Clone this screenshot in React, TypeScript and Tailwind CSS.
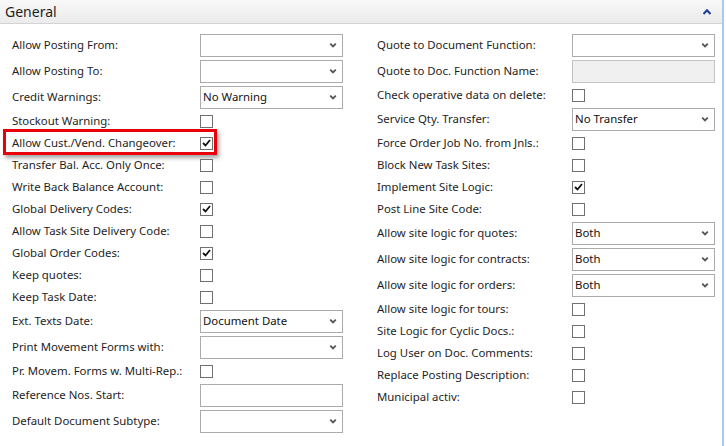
import React from 'react';

type Row =
  | { label: string; kind: 'select'; value?: string }
  | { label: string; kind: 'check'; checked?: boolean; highlight?: boolean }
  | { label: string; kind: 'text'; disabled?: boolean };

const leftRows: Row[] = [
  { label: 'Allow Posting From:', kind: 'select' },
  { label: 'Allow Posting To:', kind: 'select' },
  { label: 'Credit Warnings:', kind: 'select', value: 'No Warning' },
  { label: 'Stockout Warning:', kind: 'check' },
  { label: 'Allow Cust./Vend. Changeover:', kind: 'check', checked: true, highlight: true },
  { label: 'Transfer Bal. Acc. Only Once:', kind: 'check' },
  { label: 'Write Back Balance Account:', kind: 'check' },
  { label: 'Global Delivery Codes:', kind: 'check', checked: true },
  { label: 'Allow Task Site Delivery Code:', kind: 'check' },
  { label: 'Global Order Codes:', kind: 'check', checked: true },
  { label: 'Keep quotes:', kind: 'check' },
  { label: 'Keep Task Date:', kind: 'check' },
  { label: 'Ext. Texts Date:', kind: 'select', value: 'Document Date' },
  { label: 'Print Movement Forms with:', kind: 'select' },
  { label: 'Pr. Movem. Forms w. Multi-Rep.:', kind: 'check' },
  { label: 'Reference Nos. Start:', kind: 'text' },
  { label: 'Default Document Subtype:', kind: 'select' },
];

const rightRows: Row[] = [
  { label: 'Quote to Document Function:', kind: 'select' },
  { label: 'Quote to Doc. Function Name:', kind: 'text', disabled: true },
  { label: 'Check operative data on delete:', kind: 'check' },
  { label: 'Service Qty. Transfer:', kind: 'select', value: 'No Transfer' },
  { label: 'Force Order Job No. from Jnls.:', kind: 'check' },
  { label: 'Block New Task Sites:', kind: 'check' },
  { label: 'Implement Site Logic:', kind: 'check', checked: true },
  { label: 'Post Line Site Code:', kind: 'check' },
  { label: 'Allow site logic for quotes:', kind: 'select', value: 'Both' },
  { label: 'Allow site logic for contracts:', kind: 'select', value: 'Both' },
  { label: 'Allow site logic for orders:', kind: 'select', value: 'Both' },
  { label: 'Allow site logic for tours:', kind: 'check' },
  { label: 'Site Logic for Cyclic Docs.:', kind: 'check' },
  { label: 'Log User on Doc. Comments:', kind: 'check' },
  { label: 'Replace Posting Description:', kind: 'check' },
  { label: 'Municipal activ:', kind: 'check' },
];

function Chevron() {
  return (
    <svg width="8" height="6" viewBox="0 0 8 6" className="shrink-0">
      <path d="M1.2 1.6 L4 4.4 L6.8 1.6" fill="none" stroke="#555" strokeWidth="1.8" />
    </svg>
  );
}

function Control({ row }: { row: Row }) {
  if (row.kind === 'check') {
    return (
      <div className="w-[13px] h-[13px] border border-[#707070] bg-white flex items-center justify-center">
        {row.checked && (
          <svg width="9" height="8" viewBox="0 0 9 8">
            <path d="M1 4 L3.5 6.5 L8 1" fill="none" stroke="#111" strokeWidth="1.8" />
          </svg>
        )}
      </div>
    );
  }
  if (row.kind === 'text') {
    return (
      <div
        className={`w-[143px] h-[23px] border ${
          row.disabled ? 'bg-[#f0f0f0] border-[#c4c4c4]' : 'bg-white border-[#ababab]'
        }`}
      />
    );
  }
  return (
    <div className="w-[143px] h-[23px] border border-[#ababab] bg-white flex items-center justify-between pl-[2px] pr-[5px]">
      <span className="text-[11.4px] text-[#111]">{row.value ?? ''}</span>
      <Chevron />
    </div>
  );
}

function Column({ rows, labelWidth }: { rows: Row[]; labelWidth: string }) {
  return (
    <div className="flex flex-col">
      {rows.map((row) => (
        <div
          key={row.label}
          className={`relative flex items-center ${row.kind === 'check' ? 'h-[22px]' : 'h-[26px]'}`}
        >
          <div className={`${labelWidth} shrink-0 text-[11.4px] text-[#1e1e1e] whitespace-nowrap`}>
            {row.label}
          </div>
          <Control row={row} />
          {row.kind === 'check' && row.highlight && (
            <div className="absolute left-[-9px] top-[-3px] w-[214px] h-[26px] border-[3px] border-[#e8000b] shadow-[2px_3px_4px_rgba(0,0,0,0.35)]" />
          )}
        </div>
      ))}
    </div>
  );
}

export default function App() {
  return (
    <div
      className="w-[726px] h-[446px] bg-white overflow-hidden flex"
      style={{ fontFamily: '"Segoe UI", "Noto Sans", "Liberation Sans", sans-serif' }}
    >
      <div className="w-[722px] flex flex-col">
        {/* Section header */}
        <div className="h-[24px] flex items-center justify-between pl-[5px] pr-[11px] bg-gradient-to-b from-[#f8f8f8] to-[#ebebeb] border-b border-[#d4d4d4]">
          <span className="text-[14px] text-[#1e1e1e]">General</span>
          <svg width="8" height="6" viewBox="0 0 8 6">
            <path d="M0.5 5 L4 1.2 L7.5 5" fill="none" stroke="#1d3f94" strokeWidth="2" />
          </svg>
        </div>

        <div className="flex pt-[8px]">
          <div className="w-[365px] pl-[12px]">
            <Column rows={leftRows} labelWidth="w-[188px]" />
          </div>
          <div className="pl-[12px]">
            <Column rows={rightRows} labelWidth="w-[195px]" />
          </div>
        </div>
      </div>
      <div className="w-[2px] bg-[#a9c9ef]" />
    </div>
  );
}
